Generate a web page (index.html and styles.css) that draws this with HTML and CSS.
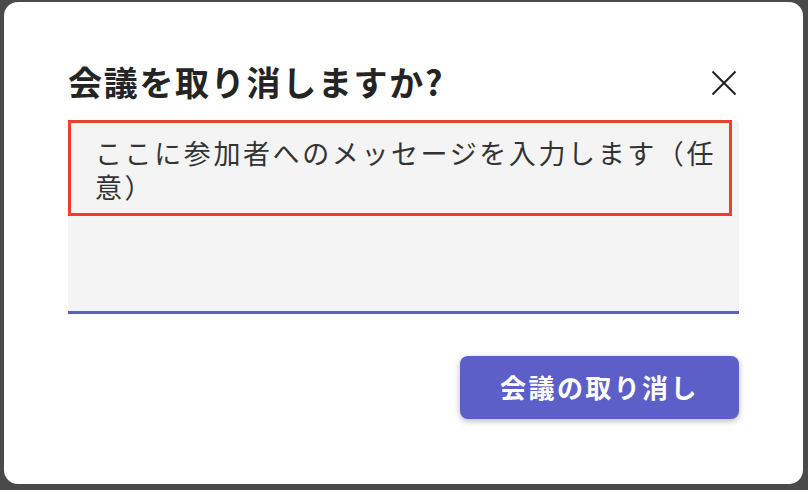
FILE: index.html
```html
<!DOCTYPE html>
<html lang="ja">
<head>
<meta charset="utf-8">
<link rel="stylesheet" href="styles.css">
</head>
<body>
<div class="dialog">
  <div class="header">
    <h1 class="title">会議を取り消しますか?</h1>
    <button class="close" aria-label="閉じる">
      <svg width="26" height="26" viewBox="0 0 26 26"><path d="M1.5 1.5 L24.5 24.5 M24.5 1.5 L1.5 24.5" stroke="#1f1f1f" stroke-width="2" fill="none"/></svg>
    </button>
  </div>
  <div class="field">
    <div class="highlight">
      <p class="placeholder">ここに参加者へのメッセージを入力します（任意）</p>
    </div>
  </div>
  <div class="actions">
    <button class="primary">会議の取り消し</button>
  </div>
</div>
</body>
</html>
```
FILE: styles.css
```css
html, body {
  margin: 0;
  padding: 0;
  background: #4a4a4a;
  font-family: "Noto Sans CJK JP", "Noto Sans", sans-serif;
}
body {
  padding: 2px 5px 6px 4px;
}
.dialog {
  box-sizing: border-box;
  width: 799px;
  height: 482px;
  background: #ffffff;
  border-radius: 14px;
  padding: 60px 64px 0 64px;
  display: flex;
  flex-direction: column;
}
.header {
  display: flex;
  align-items: center;
  justify-content: space-between;
  height: 40px;
}
.title {
  margin: 0;
  font-size: 34px;
  line-height: 40px;
  font-weight: 700;
  color: #242424;
  letter-spacing: 1.7px;
}
.close {
  border: 0;
  background: none;
  padding: 0;
  width: 26px;
  height: 26px;
  margin-right: 2px;
  margin-top: 2px;
  display: flex;
}
.field {
  margin-top: 18px;
  height: 194px;
  box-sizing: border-box;
  background: #f4f4f4;
  border-bottom: 3px solid #5b5fc7;
  border-radius: 4px 4px 0 0;
}
.highlight {
  box-sizing: border-box;
  width: 664px;
  height: 96px;
  border: 3px solid #e8412c;
  padding: 13px 8px 0 24px;
}
.placeholder {
  margin: 0;
  font-size: 27px;
  line-height: 34px;
  letter-spacing: 2.6px;
  color: #333333;
  font-weight: 400;
}
.actions {
  display: flex;
  justify-content: flex-end;
  margin-top: 42px;
}
.primary {
  width: 279px;
  height: 63px;
  border: 0;
  border-radius: 8px;
  background: #5b5fc7;
  color: #ffffff;
  font-family: "Noto Sans CJK JP", "Noto Sans", sans-serif;
  font-size: 26px;
  font-weight: 700;
  letter-spacing: 2.4px;
  box-shadow: 0 2px 6px rgba(0, 0, 0, 0.28);
  padding: 0 0 2px 0;
}
```
